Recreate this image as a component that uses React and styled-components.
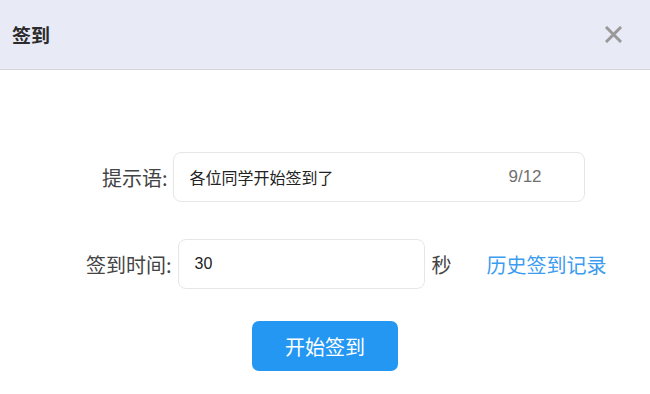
import styled, { createGlobalStyle } from "styled-components"

const GlobalStyle = createGlobalStyle`
  html, body {
    margin: 0;
    padding: 0;
    background: #ffffff;
    font-family: "Noto Sans CJK SC", "Noto Sans", sans-serif;
    color: #333;
  }
`

const Dialog = styled.div`
  width: 650px;
  height: 394px;
  background: #fff;
  display: flex;
  flex-direction: column;
`

const Header = styled.div`
  height: 69px;
  flex: 0 0 69px;
  background: #e8eaf6;
  border-bottom: 1px solid #d4d6de;
  display: flex;
  align-items: center;
  justify-content: space-between;
  padding: 0 28px 0 12px;
`

const Title = styled.h3`
  margin: 0;
  font-size: 19px;
  font-weight: 700;
  color: #2b2b2b;
`

const CloseButton = styled.button`
  border: none;
  background: transparent;
  padding: 0;
  width: 18px;
  height: 18px;
  display: flex;
  align-items: center;
  justify-content: center;
  cursor: pointer;
`

const Body = styled.div`
  padding-top: 82px;
  display: flex;
  flex-direction: column;
`

const Row = styled.div`
  display: flex;
  align-items: center;
  padding-left: ${({ indent }) => indent}px;
  margin-bottom: ${({ spacing }) => spacing}px;
`

const Label = styled.label`
  font-size: 20px;
  color: #444;
  margin-right: ${({ gap }) => gap}px;
  white-space: nowrap;
`

const Field = styled.div`
  width: ${({ width }) => width}px;
  height: 50px;
  box-sizing: border-box;
  border: 1px solid #e6e6e6;
  border-radius: 8px;
  display: flex;
  align-items: center;
  padding: 0 42px 0 16px;
`

const Input = styled.input`
  flex: 1;
  min-width: 0;
  border: none;
  outline: none;
  font-family: "Liberation Sans", "Noto Sans CJK SC", sans-serif;
  font-size: 16px;
  color: #222;
  padding: 0;
  background: transparent;
`

const Counter = styled.span`
  font-family: "Liberation Sans", Arial, sans-serif;
  font-size: 17px;
  color: #707070;
`

const Unit = styled.span`
  font-size: 20px;
  color: #444;
  margin-left: 7px;
`

const HistoryLink = styled.a`
  font-size: 20px;
  color: #3b9cf0;
  margin-left: 35px;
  text-decoration: none;
  cursor: pointer;
`

const Actions = styled.div`
  display: flex;
  justify-content: center;
`

const PrimaryButton = styled.button`
  width: 146px;
  height: 50px;
  border: none;
  border-radius: 7px;
  background: #2497f3;
  color: #fff;
  font-family: inherit;
  font-size: 20px;
  cursor: pointer;
`

const CloseIcon = () => (
  <svg width="17" height="17" viewBox="0 0 17 17">
    <path d="M2 2 L15 15 M15 2 L2 15" stroke="#999" strokeWidth="3" strokeLinecap="square" />
  </svg>
)

export default function App() {
  return (
    <>
      <GlobalStyle />
      <Dialog>
        <Header>
          <Title>签到</Title>
          <CloseButton aria-label="关闭">
            <CloseIcon />
          </CloseButton>
        </Header>
        <Body>
          <Row indent={102} spacing={37}>
            <Label gap={5}>提示语:</Label>
            <Field width={412}>
              <Input defaultValue="各位同学开始签到了" maxLength={12} />
              <Counter>9/12</Counter>
            </Field>
          </Row>
          <Row indent={86} spacing={32}>
            <Label gap={6}>签到时间:</Label>
            <Field width={247}>
              <Input defaultValue="30" />
            </Field>
            <Unit>秒</Unit>
            <HistoryLink>历史签到记录</HistoryLink>
          </Row>
          <Actions>
            <PrimaryButton>开始签到</PrimaryButton>
          </Actions>
        </Body>
      </Dialog>
    </>
  )
}
